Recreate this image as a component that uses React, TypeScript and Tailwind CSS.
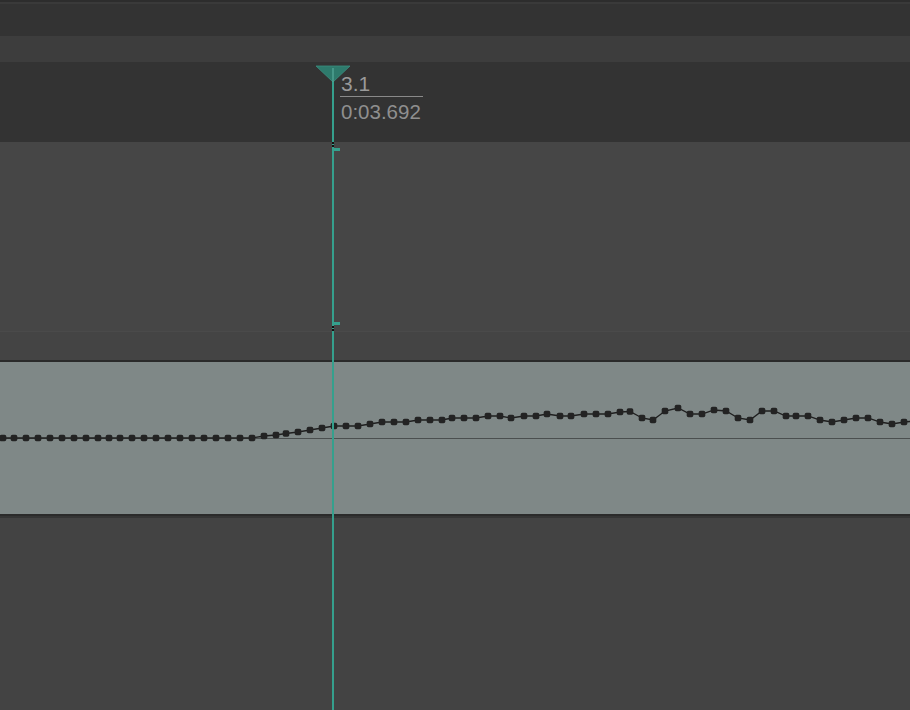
import React from "react";

// automation points, page x / y (band starts at y=362)
const flatXs = [3, 14, 26, 38, 50, 62, 74, 86, 98, 109, 120, 132, 144, 156, 168, 180, 192, 204, 216, 228, 240, 252];
const curve: [number, number][] = [
  ...flatXs.map((x) => [x, 438] as [number, number]),
  [264, 436], [276, 435], [286, 433.5], [298, 432], [310, 430], [322, 428], [334, 426],
  [346, 426], [358, 426], [370, 424], [382, 422], [394, 422], [406, 422], [418, 420],
  [430, 420], [442, 420], [452, 418], [464, 418], [476, 418], [488, 416], [500, 416],
  [511, 418], [524, 416], [536, 416], [547, 414], [560, 416], [571, 416], [584, 414],
  [596, 414], [608, 414], [620, 412], [630, 411.5], [642, 418], [653, 420], [665, 411],
  [678, 408], [690, 414], [702, 414], [714, 410], [726, 411], [738, 418], [750, 420],
  [762, 411], [774, 411], [786, 416], [796, 416], [808, 416], [820, 420], [832, 422],
  [844, 420], [856, 418], [868, 418], [880, 422], [892, 424], [904, 422], [916, 421],
];

const BAND_TOP = 362;

function Automation() {
  const pts = curve.map(([x, y]) => `${x},${y - BAND_TOP}`).join(" ");
  return (
    <svg className="absolute inset-0" width="910" height="152" viewBox="0 0 910 152">
      <line x1="0" y1="76.5" x2="910" y2="76.5" stroke="#4b4f4f" strokeWidth="1" />
      <polyline points={pts} fill="none" stroke="#1f1f1f" strokeWidth="1.3" />
      {curve.map(([x, y], i) => (
        <rect key={i} x={x - 3.3} y={y - BAND_TOP - 3.3} width="6.6" height="6.6" rx="1.8" fill="#232323" />
      ))}
    </svg>
  );
}

function Playhead() {
  return (
    <div className="absolute left-0 top-0 w-[910px] h-[710px] pointer-events-none">
      <svg className="absolute left-0 top-0" width="910" height="710" viewBox="0 0 910 710">
        <rect x="332" y="66" width="2" height="644" fill="#35a08d" />
        <polygon points="316,66 350,66 333,82" fill="#2e7a6c" stroke="#3b8f80" strokeWidth="0.8" />
        <rect x="332.5" y="68" width="1" height="14" fill="#5fb3a3" />
        {/* small dark ticks where the line crosses region edges */}
        <rect x="332" y="142" width="2" height="2" fill="#111" />
        <rect x="332" y="145" width="2" height="2" fill="#111" />
        <rect x="332" y="326" width="2" height="2" fill="#111" />
        <rect x="332" y="329" width="2" height="2" fill="#111" />
        <rect x="332" y="148" width="8" height="3" fill="#35a08d" />
        <rect x="332" y="322" width="8" height="3" fill="#35a08d" />
      </svg>
      <div
        className="absolute left-[340px] top-[71px] flex flex-col text-[#9a9a9a]"
        style={{ fontFamily: '"Liberation Sans", Arial, sans-serif' }}
      >
        <span className="text-[21px] leading-[25px] pl-px w-[83px] border-b border-[#8a8a8a]">3.1</span>
        <span className="text-[20.5px] leading-[24px] pt-[3px] pl-px text-[#8f8f8f]">0:03.692</span>
      </div>
    </div>
  );
}

export default function App() {
  return (
    <div className="relative w-[910px] h-[710px] overflow-hidden flex flex-col bg-[#434343]">
      <div className="h-[2px] bg-[#2d2d2d]" />
      <div className="h-[2px] bg-[#3a3a3a]" />
      <div className="h-[32px] bg-[#333333]" />
      <div className="h-[26px] bg-[#3d3d3d]" />
      <div className="h-[80px] bg-[#333333]" />
      <div className="h-[189px] bg-[#464646]" />
      <div className="h-[29px] bg-[#444444] border-t border-[#4a4a4a]" />
      <div className="h-[2px] bg-[#2a2a2a]" />
      <div className="relative h-[152px] bg-[#7f8887]">
        <Automation />
      </div>
      <div className="h-[2px] bg-[#2b2b2b]" />
      <div className="h-[2px] bg-[#353535]" />
      <div className="flex-1 bg-[#434343]" />
      <Playhead />
    </div>
  );
}
